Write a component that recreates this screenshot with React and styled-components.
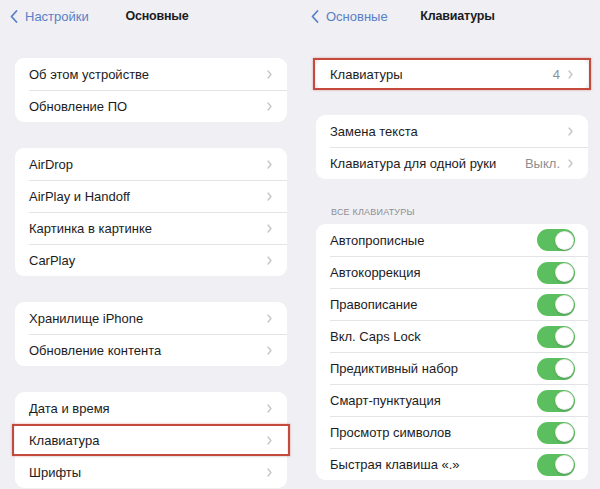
import styled, { createGlobalStyle } from 'styled-components';

const GlobalStyle = createGlobalStyle`
  html, body {
    margin: 0;
    padding: 0;
    background: #efeff4;
  }
  body {
    font-family: "Liberation Sans", Arial, sans-serif;
    color: #1c1c1e;
    -webkit-font-smoothing: antialiased;
  }
`;

const Screen = styled.div`
  display: flex;
  width: 600px;
  height: 489px;
  overflow: hidden;
  background: #efeff4;
`;

const Panel = styled.div`
  width: 300px;
  flex-shrink: 0;
`;

const NavBar = styled.div`
  display: grid;
  grid-template-columns: 1fr auto 1fr;
  align-items: center;
  width: 304px;
  height: 32px;
  padding-left: ${p => p.$left}px;
  box-sizing: border-box;
`;

const BackLink = styled.div`
  display: flex;
  align-items: center;
  gap: 7px;
  color: #5a80c6;
  font-size: 13px;
`;

const Title = styled.div`
  font-size: 12.5px;
  font-weight: 700;
  color: #1c1c1e;
  letter-spacing: -0.2px;
`;

const Content = styled.div`
  display: flex;
  flex-direction: column;
  padding: 26px ${p => p.$right}px 0 ${p => p.$left}px;
`;

const Card = styled.div`
  position: relative;
  background: #fff;
  border-radius: 9px;
  margin-bottom: ${p => p.$after ?? 26}px;
`;

const Row = styled.div`
  position: relative;
  display: flex;
  height: 32px;
  padding-left: 14px;
`;

const RowInner = styled.div`
  flex: 1;
  display: flex;
  align-items: center;
  justify-content: space-between;
  padding-right: ${p => (p.$toggle ? 13 : 15)}px;
  border-top: ${p => (p.$first ? 'none' : '1px solid #e4e4e7')};
  font-size: 13px;
`;

const Trail = styled.div`
  display: flex;
  align-items: center;
  gap: 8px;
  color: #8e8e93;
  font-size: 13px;
`;

const Highlight = styled.div`
  position: absolute;
  top: 0;
  bottom: 0;
  left: -3px;
  right: -3px;
  border: 2px solid #c54a3e;
  box-shadow: 0 0 2px rgba(200, 70, 59, 0.5);
  pointer-events: none;
`;

const SectionLabel = styled.div`
  font-size: 9px;
  line-height: 12px;
  color: #8e8e93;
  text-transform: uppercase;
  letter-spacing: 0.2px;
  padding: 0 0 6px 15px;
`;

const Switch = styled.div`
  position: relative;
  width: 38px;
  height: 22px;
  border-radius: 11px;
  background: #5cbf5f;
`;

const Knob = styled.div`
  position: absolute;
  top: 1.5px;
  right: 1.5px;
  width: 19px;
  height: 19px;
  box-sizing: border-box;
  border-radius: 50%;
  background: #fff;
  border: 0.5px solid rgba(0, 0, 0, 0.08);
  box-shadow: 0 1px 2px rgba(0, 0, 0, 0.2);
`;

const BackChevron = () => (
  <svg width="8" height="13" viewBox="0 0 8 13">
    <path d="M6.5 1 L1.5 6.5 L6.5 12" fill="none" stroke="#5a80c6" strokeWidth="1.8" strokeLinecap="round" strokeLinejoin="round" />
  </svg>
);

const Chevron = () => (
  <svg width="5" height="9" viewBox="0 0 5 9">
    <path d="M1 1 L4 4.5 L1 8" fill="none" stroke="#c4c4c8" strokeWidth="1.3" strokeLinecap="round" strokeLinejoin="round" />
  </svg>
);

const Toggle = () => (
  <Switch>
    <Knob />
  </Switch>
);

const Item = ({ label, value, first, marked, toggle }) => (
  <Row>
    <RowInner $first={first} $toggle={toggle}>
      <span>{label}</span>
      {toggle ? (
        <Toggle />
      ) : (
        <Trail>
          {value && <span>{value}</span>}
          <Chevron />
        </Trail>
      )}
    </RowInner>
    {marked && <Highlight />}
  </Row>
);

const Group = ({ items, after, toggle }) => (
  <Card $after={after}>
    {items.map((it, i) => (
      <Item key={it.label} {...it} first={i === 0} toggle={toggle} />
    ))}
  </Card>
);

const generalGroups = [
  [{ label: 'Об этом устройстве' }, { label: 'Обновление ПО' }],
  [
    { label: 'AirDrop' },
    { label: 'AirPlay и Handoff' },
    { label: 'Картинка в картинке' },
    { label: 'CarPlay' },
  ],
  [{ label: 'Хранилище iPhone' }, { label: 'Обновление контента' }],
  [
    { label: 'Дата и время' },
    { label: 'Клавиатура', marked: true },
    { label: 'Шрифты' },
  ],
];

const switches = [
  'Автопрописные',
  'Автокоррекция',
  'Правописание',
  'Вкл. Caps Lock',
  'Предиктивный набор',
  'Смарт-пунктуация',
  'Просмотр символов',
  'Быстрая клавиша «.»',
].map(label => ({ label }));

const App = () => (
  <>
    <GlobalStyle />
    <Screen>
      <Panel>
        <NavBar $left={10}>
          <BackLink>
            <BackChevron />
            Настройки
          </BackLink>
          <Title>Основные</Title>
          <span />
        </NavBar>
        <Content $left={15} $right={13}>
          {generalGroups.map((g, i) => (
            <Group key={i} items={g} />
          ))}
        </Content>
      </Panel>

      <Panel>
        <NavBar $left={11}>
          <BackLink>
            <BackChevron />
            Основные
          </BackLink>
          <Title>Клавиатуры</Title>
          <span />
        </NavBar>
        <Content $left={16} $right={12}>
          <Group after={25} items={[{ label: 'Клавиатуры', value: '4', marked: true }]} />
          <Group
            after={27}
            items={[
              { label: 'Замена текста' },
              { label: 'Клавиатура для одной руки', value: 'Выкл.' },
            ]}
          />
          <SectionLabel>Все клавиатуры</SectionLabel>
          <Group items={switches} toggle />
        </Content>
      </Panel>
    </Screen>
  </>
);

export default App;
